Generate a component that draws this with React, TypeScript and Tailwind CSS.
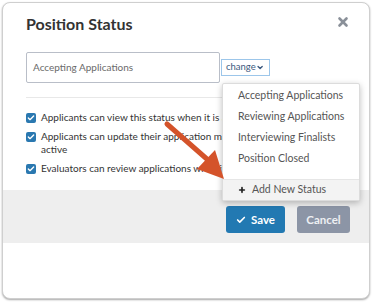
import { Check, ChevronDown, Plus, X } from "lucide-react";

const statuses = [
  "Accepting Applications",
  "Reviewing Applications",
  "Interviewing Finalists",
  "Position Closed",
];

function CheckBox() {
  return (
    <span className="mt-[2px] flex h-[10px] w-[10px] shrink-0 items-center justify-center rounded-[2px] bg-[#2a78b0]">
      <Check className="h-[8px] w-[8px] text-white" strokeWidth={4} />
    </span>
  );
}

export default function App() {
  return (
    <div className="relative h-[302px] w-[372px] bg-white font-['Lato',sans-serif]">
      <div className="absolute left-[2px] top-[2px] flex h-[297px] w-[368px] flex-col overflow-hidden rounded-[8px] border border-[#cfcfcf] bg-white shadow-[0_1px_2px_rgba(0,0,0,0.35)]">
        <div className="flex items-start justify-between pl-[23px] pr-[19px] pt-[11px]">
          <h2 className="text-[16px] font-bold leading-[20px] text-[#333]">Position Status</h2>
          <X className="mt-[1px] h-[14px] w-[14px] text-[#8a9099]" strokeWidth={4.5} />
        </div>

        <div className="mt-[18px] flex items-center pl-[23px]">
          <div className="flex h-[31px] w-[194px] items-center rounded-[2px] border border-[#b9bec8] px-[6px] text-[10px] text-[#6a6a6a]">
            Accepting Applications
          </div>
          <div className="ml-[1px] flex h-[17px] w-[49px] items-center justify-between border border-[#9cc6ea] pl-[4px] pr-[5px] text-[9.5px] text-[#3d5a80]">
            change
            <ChevronDown className="h-[9px] w-[9px] text-[#3d5a80]" strokeWidth={4} />
          </div>
        </div>

        <div className="ml-[23px] mt-[14px] h-px w-[300px] bg-[#e8e8e8]" />

        <div className="mt-[13px] flex flex-col gap-[6px] pl-[23px] text-[10px] leading-[13px] text-[#333]">
          <div className="flex gap-[5px]">
            <CheckBox />
            <span className="whitespace-nowrap">Applicants can view this status when it is active</span>
          </div>
          <div className="flex gap-[5px]">
            <CheckBox />
            <span className="whitespace-nowrap">
              Applicants can update their application materials while
              <br />
              active
            </span>
          </div>
          <div className="flex gap-[5px]">
            <CheckBox />
            <span className="whitespace-nowrap">Evaluators can review applications while it is active</span>
          </div>
        </div>

        <div className="mt-[15px] flex h-[53px] items-start justify-end gap-[12px] bg-[#eeeeee] pr-[19px] pt-[16px]">
          <button className="flex h-[27px] w-[59px] items-center justify-center gap-[5px] rounded-[3px] bg-[#2279b2] text-[11.5px] font-bold text-white">
            <Check className="h-[10px] w-[10px]" strokeWidth={4} />
            Save
          </button>
          <button className="flex h-[27px] w-[53px] items-center justify-center rounded-[3px] bg-[#8c95a6] text-[11.5px] font-bold text-[#eef0f3]">
            Cancel
          </button>
        </div>

        <div className="absolute left-[219px] top-[80px] w-[138px] overflow-hidden rounded-[2px] border border-[#dcdcdc] bg-white shadow-[0_2px_6px_rgba(0,0,0,0.25)]">
          <div className="flex flex-col pb-[10px] pt-[1px]">
            {statuses.map((s) => (
              <div key={s} className="flex h-[21px] items-center whitespace-nowrap pl-[15px] text-[10.5px] text-[#555]">
                {s}
              </div>
            ))}
          </div>
          <div className="flex h-[21px] items-center gap-[6px] border-t border-[#e6e6e6] bg-[#f3f3f3] pl-[15px] text-[10.5px] text-[#555]">
            <Plus className="h-[8px] w-[8px] text-[#222]" strokeWidth={5} />
            Add New Status
          </div>
        </div>
      </div>

      <svg className="absolute left-0 top-0" width="372" height="302" viewBox="0 0 372 302">
        <line x1="167" y1="124" x2="208" y2="160" stroke="#d4532a" strokeWidth="5" strokeLinecap="round" />
        <polygon points="224,179 197,169 215,150" fill="#d4532a" />
      </svg>
    </div>
  );
}
